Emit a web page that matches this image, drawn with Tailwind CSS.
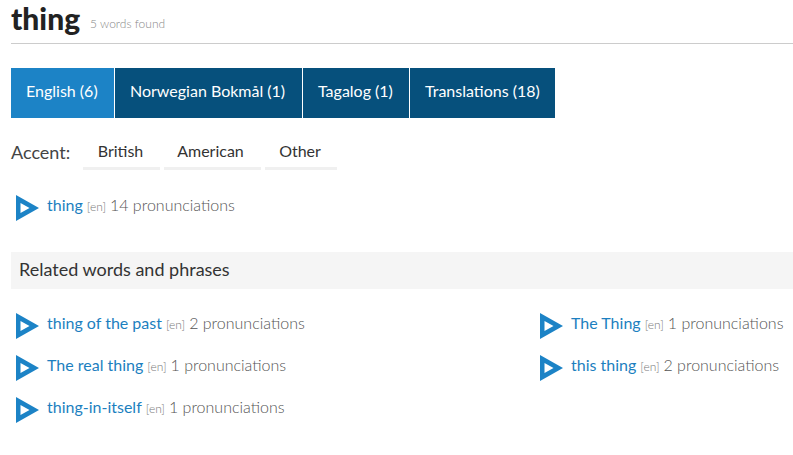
<!DOCTYPE html>
<html lang="en">
<head>
    <meta charset="UTF-8">
    <title>thing</title>
    <script src="https://cdn.jsdelivr.net/npm/@tailwindcss/browser@4"></script>
</head>
<body class="bg-white overflow-hidden font-['Lato',sans-serif] text-[#444]">
    <div class="pl-[11px]">
        <!-- header -->
        <div class="flex items-start h-[44px] border-b border-[#ccc]">
            <h1 class="text-[30px] leading-[36px] font-black text-[#222]">thing</h1>
            <span class="ml-[10px] mt-[15px] text-[12px] font-light text-[#888]">5 words found</span>
        </div>

        <!-- language tabs -->
        <div class="flex mt-[24px] text-[16px] text-white">
            <a class="w-[103px] h-[50px] pl-[15px] pb-[4px] flex items-center bg-[#1c83c6]">English (6)</a>
            <a class="w-[188px] h-[50px] pl-[15px] pb-[4px] flex items-center bg-[#06507c] border-l border-white">Norwegian Bokmål (1)</a>
            <a class="w-[107px] h-[50px] pl-[15px] pb-[4px] flex items-center bg-[#06507c] border-l border-white">Tagalog (1)</a>
            <a class="w-[146px] h-[50px] pl-[15px] pb-[4px] flex items-center bg-[#06507c] border-l border-white">Translations (18)</a>
        </div>

        <!-- accent filter -->
        <div class="flex items-start mt-[20px] h-[32px]">
            <span class="text-[18px] leading-[28px] w-[72px]">Accent:</span>
            <div class="flex gap-[4px] text-[16px] text-[#333]">
                <span class="h-[32px] w-[77px] pt-[1px] pr-[2px] text-center border-b-[3px] border-[#f0f0f0]">British</span>
                <span class="h-[32px] w-[97px] pt-[1px] pr-[4px] text-center border-b-[3px] border-[#f0f0f0]">American</span>
                <span class="h-[32px] w-[72px] pt-[1px] pr-[2px] text-center border-b-[3px] border-[#f0f0f0]">Other</span>
            </div>
        </div>

        <!-- main word -->
        <div class="flex items-center h-[27px] mt-[24px] pl-[5px] text-[16px] font-light text-[#555]">
            <svg class="w-[23px] h-[26px] mr-[8px] shrink-0" viewBox="0 0 23 26"><path fill="#1c83c6" fill-rule="evenodd" d="M0 0L23 13L0 26ZM4.500 8V18L13.500 13Z"/></svg>
            <p class="flex items-baseline pb-[6px]">
                <a class="font-normal text-[#1c7fc0]">thing</a>
                <span class="ml-[4px] mr-[4px] text-[12px] text-[#777]">[en]</span>
                <span>14 pronunciations</span>
            </p>
        </div>

        <!-- related -->
        <h2 class="mt-[31px] h-[37px] pl-[8px] pb-[3px] flex items-center bg-[#f5f5f5] text-[18px] text-[#333]">Related words and phrases</h2>

        <div class="grid grid-cols-[524px_1fr] mt-[23px] pl-[5px] text-[16px] font-light text-[#555]">
            <div class="flex flex-col gap-[15px]">
                <div class="flex items-center h-[27px]">
                    <svg class="w-[23px] h-[26px] mr-[8px] shrink-0" viewBox="0 0 23 26"><path fill="#1c83c6" fill-rule="evenodd" d="M0 0L23 13L0 26ZM4.500 8V18L13.500 13Z"/></svg>
                    <p class="flex items-baseline pb-[6px]">
                        <a class="font-normal text-[#1c7fc0]">thing of the past</a>
                        <span class="ml-[4px] mr-[4px] text-[12px] text-[#777]">[en]</span>
                        <span>2 pronunciations</span>
                    </p>
                </div>
                <div class="flex items-center h-[27px]">
                    <svg class="w-[23px] h-[26px] mr-[8px] shrink-0" viewBox="0 0 23 26"><path fill="#1c83c6" fill-rule="evenodd" d="M0 0L23 13L0 26ZM4.500 8V18L13.500 13Z"/></svg>
                    <p class="flex items-baseline pb-[6px]">
                        <a class="font-normal text-[#1c7fc0]">The real thing</a>
                        <span class="ml-[4px] mr-[4px] text-[12px] text-[#777]">[en]</span>
                        <span>1 pronunciations</span>
                    </p>
                </div>
                <div class="flex items-center h-[27px]">
                    <svg class="w-[23px] h-[26px] mr-[8px] shrink-0" viewBox="0 0 23 26"><path fill="#1c83c6" fill-rule="evenodd" d="M0 0L23 13L0 26ZM4.500 8V18L13.500 13Z"/></svg>
                    <p class="flex items-baseline pb-[6px]">
                        <a class="font-normal text-[#1c7fc0]">thing-in-itself</a>
                        <span class="ml-[4px] mr-[4px] text-[12px] text-[#777]">[en]</span>
                        <span>1 pronunciations</span>
                    </p>
                </div>
            </div>
            <div class="flex flex-col gap-[15px]">
                <div class="flex items-center h-[27px]">
                    <svg class="w-[23px] h-[26px] mr-[8px] shrink-0" viewBox="0 0 23 26"><path fill="#1c83c6" fill-rule="evenodd" d="M0 0L23 13L0 26ZM4.500 8V18L13.500 13Z"/></svg>
                    <p class="flex items-baseline pb-[6px]">
                        <a class="font-normal text-[#1c7fc0]">The Thing</a>
                        <span class="ml-[4px] mr-[4px] text-[12px] text-[#777]">[en]</span>
                        <span>1 pronunciations</span>
                    </p>
                </div>
                <div class="flex items-center h-[27px]">
                    <svg class="w-[23px] h-[26px] mr-[8px] shrink-0" viewBox="0 0 23 26"><path fill="#1c83c6" fill-rule="evenodd" d="M0 0L23 13L0 26ZM4.500 8V18L13.500 13Z"/></svg>
                    <p class="flex items-baseline pb-[6px]">
                        <a class="font-normal text-[#1c7fc0]">this thing</a>
                        <span class="ml-[4px] mr-[4px] text-[12px] text-[#777]">[en]</span>
                        <span>2 pronunciations</span>
                    </p>
                </div>
            </div>
        </div>
    </div>
</body>
</html>
